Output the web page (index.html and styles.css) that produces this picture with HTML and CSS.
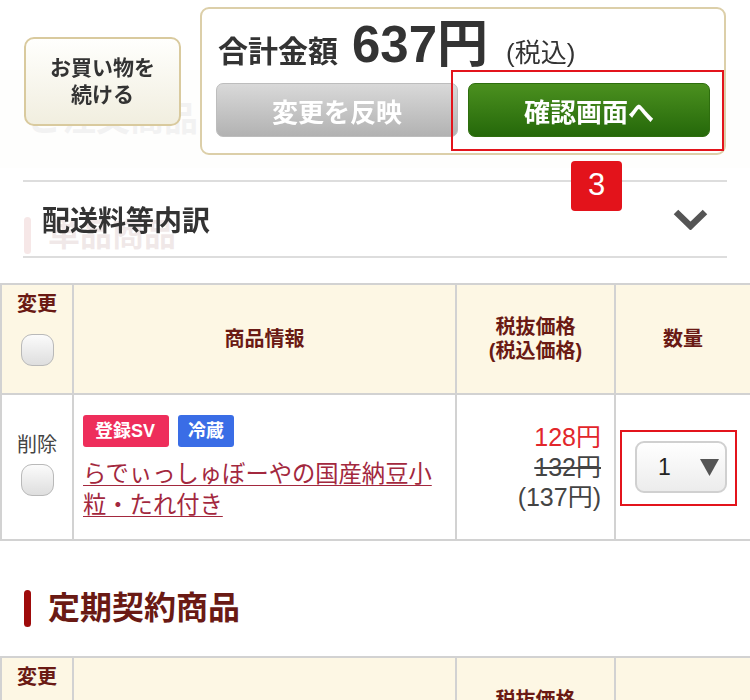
FILE: index.html
```html
<!DOCTYPE html>
<html lang="ja">
<head>
<meta charset="utf-8">
<title>ご注文商品</title>
<link rel="stylesheet" href="styles.css">
</head>
<body>
<div class="page">
  <div class="site-head"></div>
  <div class="title-band"><h1 class="page-title">ご注文商品</h1></div>

  <section class="sec">
    <h2 class="sec-title"><span class="sec-bar"></span>単品商品</h2>
    <table class="cart">
      <colgroup><col class="c1"><col class="c2"><col class="c3"><col class="c4"></colgroup>
      <thead>
        <tr class="head-row">
          <th class="th-change"><div class="th-label">変更</div><span class="cb"></span></th>
          <th>商品情報</th>
          <th>税抜価格<br>(税込価格)</th>
          <th>数量</th>
        </tr>
      </thead>
      <tbody>
        <tr class="item-row">
          <td class="td-del"><div class="del-label">削除</div><span class="cb"></span></td>
          <td class="td-info">
            <div class="tags"><span class="tag tag-sv">登録SV</span><span class="tag tag-cold">冷蔵</span></div>
            <a class="item-name" href="#">らでぃっしゅぼーやの国産納豆小粒・たれ付き</a>
          </td>
          <td class="td-price">
            <div class="p-sale">128円</div>
            <div class="p-orig">132円</div>
            <div class="p-tax">(137円)</div>
          </td>
          <td class="td-qty">
            <div class="qty">
              <span class="qty-val">1</span>
              <svg class="qty-arrow" width="19" height="17" viewBox="0 0 19 17"><polygon points="0,0 19,0 9.5,17" fill="#555"/></svg>
            </div>
          </td>
        </tr>
      </tbody>
    </table>
  </section>

  <section class="sec">
    <h2 class="sec-title"><span class="sec-bar"></span>定期契約商品</h2>
    <table class="cart">
      <colgroup><col class="c1"><col class="c2"><col class="c3"><col class="c4"></colgroup>
      <thead>
        <tr class="head-row">
          <th class="th-change"><div class="th-label">変更</div><span class="cb"></span></th>
          <th>商品情報</th>
          <th>税抜価格<br>(税込価格)</th>
          <th>数量</th>
        </tr>
      </thead>
    </table>
  </section>
</div>

<header class="topbar">
  <div class="bar-main">
    <a class="btn-continue" href="#">お買い物を<br>続ける</a>
    <div class="total-box">
      <div class="total-line">
        <span class="total-label">合計金額</span>
        <span class="total-amount">637円</span>
        <span class="total-tax">(税込)</span>
      </div>
      <div class="total-btns">
        <button class="btn btn-grey" type="button">変更を反映</button>
        <button class="btn btn-green" type="button">確認画面へ</button>
      </div>
    </div>
  </div>
  <div class="shipping">
    <span class="shipping-label">配送料等内訳</span>
    <svg class="chevron" width="35" height="21" viewBox="0 0 35 21"><polyline points="3,3 17.5,17 32,3" fill="none" stroke="#555" stroke-width="6.5" stroke-linejoin="miter"/></svg>
  </div>
  <span class="step-badge">3</span>
</header>
</body>
</html>
```

FILE: styles.css
```css
* { box-sizing: border-box; margin: 0; padding: 0; }

body {
  font-family: "Liberation Sans", "Noto Sans CJK JP", sans-serif;
  color: #333;
  background: #fff;
  width: 750px;
}

/* ---------- underlying page ---------- */
.site-head { height: 70px; }

.title-band {
  height: 98px;
  background: #f6efe4;
  display: flex;
  align-items: center;
  padding-left: 28px;
}
.page-title {
  font-size: 34px;
  font-weight: 700;
  color: #777;
  line-height: 1;
}

.sec { padding-top: 49px; }

.sec-title {
  display: flex;
  align-items: center;
  gap: 17px;
  margin-left: 24px;
  height: 37px;
  font-size: 32px;
  font-weight: 700;
  color: #6a1a14;
  line-height: 37px;
}
.sec-bar {
  width: 7px;
  height: 37px;
  background: #9e0b0b;
  border-radius: 4px;
}

.cart {
  width: 750px;
  border-collapse: collapse;
  table-layout: fixed;
  margin-top: 29px;
}
.c1 { width: 72px; }
.c2 { width: 383px; }
.c3 { width: 159px; }
.c4 { width: 136px; }

.cart th, .cart td { border: 2px solid #d2d2d2; }

.head-row th {
  height: 110px;
  background: #fdf7e4;
  color: #6a1a14;
  font-size: 20px;
  font-weight: 700;
  line-height: 24px;
  text-align: center;
  vertical-align: middle;
}
.head-row .th-change { vertical-align: top; padding-top: 7px; }
.th-label { line-height: 24px; }

.cb {
  display: block;
  width: 33px;
  height: 32px;
  margin: 18px auto 0;
  border: 1.5px solid #b9b9b9;
  border-radius: 11px;
  background: linear-gradient(#fbfbfb, #dedede);
}

.item-row td { height: 146px; vertical-align: middle; }

.td-del { text-align: center; color: #444; font-size: 20px; padding-bottom: 6px; }
.del-label { line-height: 26px; }
.td-del .cb { margin-top: 6px; }

.td-info { vertical-align: top !important; padding: 20px 6px 0 9px; }
.tags { display: flex; gap: 9px; }
.tag {
  display: inline-block;
  height: 32px;
  line-height: 32px;
  border-radius: 3px;
  color: #fff;
  font-size: 18px;
  font-weight: 700;
}
.tag-sv { background: #ee2e5b; padding: 0 14px 0 12px; }
.tag-cold { background: #3a6de6; padding: 0 10px; }

.item-name {
  display: block;
  margin-top: 12px;
  font-size: 23.3px;
  line-height: 31px;
  color: #a3283e;
  text-decoration: underline;
  text-underline-offset: 3px;
  text-decoration-thickness: 1px;
}

.td-price {
  text-align: right;
  padding-right: 13px;
  font-size: 25px;
  line-height: 30px;
  color: #444;
}
.p-sale { color: #e2262b; }
.p-orig { text-decoration: line-through; text-decoration-thickness: 2px; }

.td-qty { text-align: left; padding-left: 19px; }
.qty {
  display: inline-flex;
  align-items: center;
  justify-content: space-between;
  width: 92px;
  height: 52px;
  padding: 0 6px 0 21px;
  border: 2px solid #d0d0d0;
  border-radius: 9px;
  background: linear-gradient(#ffffff, #ececec);
  position: relative;
  vertical-align: middle;
}
.qty::after {
  content: "";
  position: absolute;
  left: -17px;
  top: -13px;
  right: -12px;
  bottom: -15px;
  border: 2px solid #e3141c;
}
.qty-val { font-size: 23px; color: #222; }

/* ---------- fixed header overlay ---------- */
.topbar {
  position: fixed;
  top: 0;
  left: 0;
  width: 750px;
  height: 258px;
  background: rgba(255, 255, 255, 0.9);
}

.bar-main {
  display: flex;
  align-items: center;
  padding: 7px 0 0 24px;
}

.btn-continue {
  display: flex;
  align-items: center;
  justify-content: center;
  width: 157px;
  height: 89px;
  border: 2px solid #d9ca9e;
  border-radius: 10px;
  background: linear-gradient(#fffffd, #f1eedf);
  color: #333;
  font-size: 21px;
  font-weight: 700;
  line-height: 27px;
  text-align: center;
  text-decoration: none;
}

.total-box {
  margin-left: 19px;
  width: 526px;
  height: 148px;
  border: 2px solid #dccfa9;
  border-radius: 9px;
  background: #fff;
  padding: 3px 14px 0;
}

.total-line {
  display: flex;
  align-items: baseline;
  height: 71px;
  padding-left: 2px;
  line-height: 66px;
}
.total-label { font-size: 30px; font-weight: 700; color: #333; }
.total-amount { font-size: 51px; font-weight: 700; color: #333; margin-left: 14px; }
.total-tax { font-size: 26px; color: #333; margin-left: 18px; }

.total-btns {
  display: flex;
  gap: 10px;
}
.btn {
  width: 242px;
  height: 54px;
  border-radius: 7px;
  color: #fff;
  font-family: inherit;
  font-size: 26px;
  font-weight: 700;
  cursor: pointer;
}
.btn-grey {
  border: 1px solid #bdbdbd;
  background: linear-gradient(#d9d9d9, #b2b2b2);
}
.btn-green {
  position: relative;
  border: 1px solid #2e6e0e;
  background: linear-gradient(#4b901f, #25680a);
}
.btn-green::after {
  content: "";
  position: absolute;
  left: -18px;
  top: -14px;
  right: -15px;
  bottom: -15px;
  border: 2px solid #e3141c;
}

.shipping {
  margin: 25px 23px 0;
  height: 78px;
  border-top: 2px solid #dddddd;
  border-bottom: 2px solid #dddddd;
  display: flex;
  align-items: center;
  justify-content: space-between;
  padding: 0 19px;
}
.shipping-label { font-size: 28px; font-weight: 700; color: #333; }

.step-badge {
  position: absolute;
  left: 571px;
  top: 161px;
  width: 51px;
  height: 50px;
  border-radius: 4px;
  background: #e3131b;
  color: #fff;
  font-size: 31px;
  line-height: 48px;
  text-align: center;
}
```
